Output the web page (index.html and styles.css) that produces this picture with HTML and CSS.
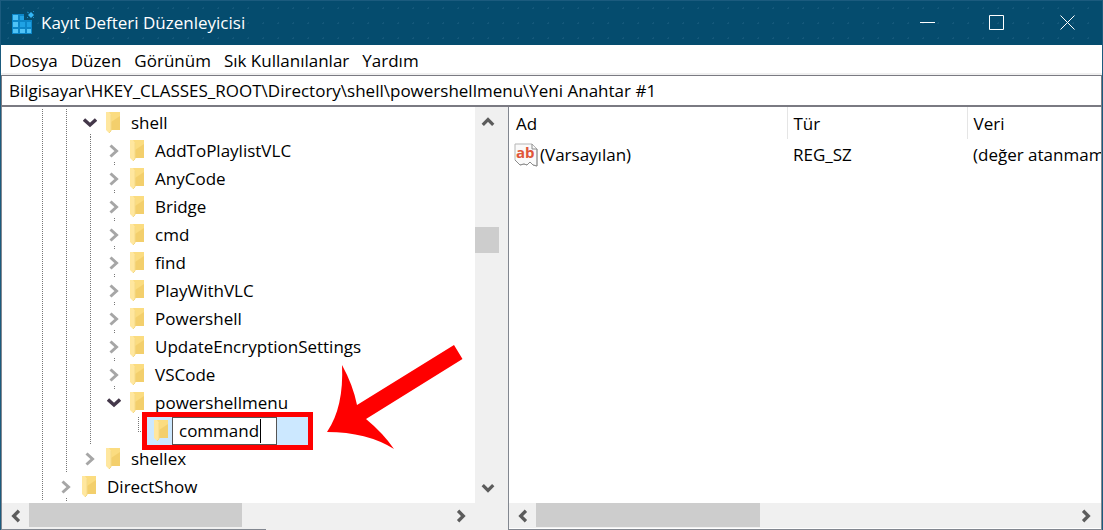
FILE: index.html
```
<!DOCTYPE html>
<html lang="tr">
<head>
<meta charset="utf-8">
<title>Kayıt Defteri Düzenleyicisi</title>
<link rel="stylesheet" href="styles.css">
</head>
<body>
<svg class="defs" width="0" height="0" aria-hidden="true">
  <symbol id="folder" viewBox="0 0 14 22">
    <path d="M3 0h11v18H3z" fill="#fbdc80"/>
    <path d="M5 10l9 -6v14H5z" fill="#f3cf6c"/>
    <path d="M0 0h3l2 3v16l-2 2L0 18z" fill="#ffe79f"/>
    <path d="M5 3v16l-2 2" fill="none" stroke="#f4d987"/>
  </symbol>
  <symbol id="chev-right" viewBox="0 0 10 14"><path d="M1.500 1.500L7.500 7L1.500 12.500" fill="none" stroke="currentColor" stroke-width="3"/></symbol>
  <symbol id="chev-down" viewBox="0 0 14 10"><path d="M1 1.500L7 7L13 1.500" fill="none" stroke="currentColor" stroke-width="3.400"/></symbol>
  <symbol id="arrow" viewBox="0 0 12 12"><path d="M1.500 3.500L6 8L10.500 3.500" fill="none" stroke="currentColor" stroke-width="2.800"/></symbol>
</svg>
<div class="window">
  <header class="titlebar">
    <svg class="app-icon" viewBox="0 0 24 24" aria-hidden="true">
      <path d="M1 3h12v6h8v14H1z" fill="#0c86c8"/>
      <g fill="#4fc3f7"><path d="M2 4h5v5H2zM2 11h5v5H2zM2 18h5v4H2zM9 18h5v4H9zM16 18h4v4h-4z"/></g>
      <g fill="#1fa2e4"><path d="M9 5h4v4H9zM9 11h5v5H9zM16 11h4v5h-4z"/></g>
      <path d="M20 1l3 3l-3 3l-3-3z" fill="#35b6f5"/><path d="M16 1l2 1M23 0l-1 1M23 7l-1-1M16 7l1-1" stroke="#1c8fc9"/>
    </svg>
    <h1 class="title">Kayıt Defteri Düzenleyicisi</h1>
    <div class="controls">
      <button class="control" aria-label="Simge durumuna küçült"><svg viewBox="0 0 16 16"><path d="M1 7.500h15"/></svg></button>
      <button class="control" aria-label="Ekranı kapla"><svg viewBox="0 0 16 16"><path d="M.5 .5h14v14H.5z"/></svg></button>
      <button class="control" aria-label="Kapat"><svg viewBox="0 0 16 16"><path d="M1.500 .5l14 14M15.500 .5l-14 14"/></svg></button>
    </div>
  </header>
  <nav class="menu">
    <button>Dosya</button><button>Düzen</button><button>Görünüm</button><button>Sık Kullanılanlar</button><button>Yardım</button>
  </nav>
  <input class="address" type="text" aria-label="Adres" value="Bilgisayar\HKEY_CLASSES_ROOT\Directory\shell\powershellmenu\Yeni Anahtar #1">
  <main class="panes">
    <section class="left">
      <ul class="tree">
        <li class="row"><i class="line"></i><i class="line"></i><button class="toggle open" aria-label="Daralt"><svg><use href="#chev-down"/></svg></button><svg class="folder"><use href="#folder"/></svg><span>shell</span></li>
        <li class="row"><i class="line"></i><i class="line"></i><i class="line"></i><button class="toggle" aria-label="Genişlet"><svg><use href="#chev-right"/></svg></button><svg class="folder"><use href="#folder"/></svg><span>AddToPlaylistVLC</span></li>
        <li class="row"><i class="line"></i><i class="line"></i><i class="line"></i><button class="toggle" aria-label="Genişlet"><svg><use href="#chev-right"/></svg></button><svg class="folder"><use href="#folder"/></svg><span>AnyCode</span></li>
        <li class="row"><i class="line"></i><i class="line"></i><i class="line"></i><button class="toggle" aria-label="Genişlet"><svg><use href="#chev-right"/></svg></button><svg class="folder"><use href="#folder"/></svg><span>Bridge</span></li>
        <li class="row"><i class="line"></i><i class="line"></i><i class="line"></i><button class="toggle" aria-label="Genişlet"><svg><use href="#chev-right"/></svg></button><svg class="folder"><use href="#folder"/></svg><span>cmd</span></li>
        <li class="row"><i class="line"></i><i class="line"></i><i class="line"></i><button class="toggle" aria-label="Genişlet"><svg><use href="#chev-right"/></svg></button><svg class="folder"><use href="#folder"/></svg><span>find</span></li>
        <li class="row"><i class="line"></i><i class="line"></i><i class="line"></i><button class="toggle" aria-label="Genişlet"><svg><use href="#chev-right"/></svg></button><svg class="folder"><use href="#folder"/></svg><span>PlayWithVLC</span></li>
        <li class="row"><i class="line"></i><i class="line"></i><i class="line"></i><button class="toggle" aria-label="Genişlet"><svg><use href="#chev-right"/></svg></button><svg class="folder"><use href="#folder"/></svg><span>Powershell</span></li>
        <li class="row"><i class="line"></i><i class="line"></i><i class="line"></i><button class="toggle" aria-label="Genişlet"><svg><use href="#chev-right"/></svg></button><svg class="folder"><use href="#folder"/></svg><span>UpdateEncryptionSettings</span></li>
        <li class="row"><i class="line"></i><i class="line"></i><i class="line"></i><button class="toggle" aria-label="Genişlet"><svg><use href="#chev-right"/></svg></button><svg class="folder"><use href="#folder"/></svg><span>VSCode</span></li>
        <li class="row"><i class="line"></i><i class="line"></i><i class="line"></i><button class="toggle open last" aria-label="Daralt"><svg><use href="#chev-down"/></svg></button><svg class="folder"><use href="#folder"/></svg><span>powershellmenu</span></li>
        <li class="row"><i class="line"></i><i class="line"></i><i class="line"></i><i class="blank"></i><i class="elbow"></i>
          <div class="selected"><svg class="folder"><use href="#folder"/></svg><input class="rename" type="text" aria-label="Anahtar adı" value="command"><i class="caret"></i></div>
          <svg class="pointer" viewBox="0 0 136 105" aria-hidden="true"><path d="M127 0L135.500 14L39 74Q56 88 67 104Q40 87 0 87Q17 62 15 20Q26 40 30 60Z" fill="#f00"/></svg>
        </li>
        <li class="row"><i class="line"></i><i class="line"></i><button class="toggle last" aria-label="Genişlet"><svg><use href="#chev-right"/></svg></button><svg class="folder"><use href="#folder"/></svg><span>shellex</span></li>
        <li class="row"><i class="line"></i><button class="toggle" aria-label="Genişlet"><svg><use href="#chev-right"/></svg></button><svg class="folder"><use href="#folder"/></svg><span>DirectShow</span></li>
      </ul>
      <div class="vbar">
        <button class="up" aria-label="Yukarı"><svg><use href="#arrow"/></svg></button>
        <i class="vthumb"></i>
        <button class="down" aria-label="Aşağı"><svg><use href="#arrow"/></svg></button>
      </div>
      <div class="hbar">
        <button class="prev" aria-label="Sola"><svg><use href="#arrow"/></svg></button>
        <i class="hthumb"></i>
        <button class="next" aria-label="Sağa"><svg><use href="#arrow"/></svg></button>
      </div>
    </section>
    <section class="right">
      <div class="list">
        <table>
          <thead><tr><th class="name">Ad</th><th class="type">Tür</th><th>Veri</th></tr></thead>
          <tbody><tr>
            <td><div class="value"><svg class="string-icon" viewBox="0 0 24 24" aria-hidden="true"><path d="M1 1h17l5 5v17l-4-1l-3-3l-3 3l-3-1l-4 1l-5-5z" fill="#fafafa" stroke="#b5b5b5"/><path d="M18 1v5h5M23 6v17l-4-1l-3-3l-3 3l-3-1l-4 1l-5-5" fill="none" stroke="#8c8c8c"/><text x="2" y="15" class="ab">ab</text></svg><span>(Varsayılan)</span></div></td>
            <td>REG_SZ</td><td>(değer atanmamış)</td>
          </tr></tbody>
        </table>
      </div>
      <div class="hbar">
        <button class="prev" aria-label="Sola"><svg><use href="#arrow"/></svg></button>
        <i class="hthumb wide"></i>
        <button class="next" aria-label="Sağa"><svg><use href="#arrow"/></svg></button>
      </div>
    </section>
  </main>
</div>
</body>
</html>
```
FILE: styles.css
```
* { box-sizing: border-box; }
body { margin: 0; background: #fff; color: #000; font: 17px/28px "Open Sans", "Noto Sans", sans-serif; }
button { display: flex; align-items: center; justify-content: center; margin: 0; padding: 0; border: 0; background: none; color: inherit; font: inherit; }
.defs { position: absolute; }
.window { display: flex; flex-direction: column; height: 100vh; overflow: hidden; border-left: 1px solid #1b5b7e; border-right: 1px solid #1b5b7e; }

.titlebar { display: flex; align-items: center; flex: none; height: 45px; padding-left: 10px; border-top: 1px solid #1b5b7e; background: radial-gradient(circle, #14587a 1px, transparent 1px) 0 0 / 15px 15px #054c6e; color: #fff; }
.app-icon { width: 24px; height: 24px; }
.title { flex: 1; margin: 0 0 0 6px; font-size: 17px; font-weight: 400; }
.controls { display: flex; }
.control { width: 70px; height: 44px; }
.control svg { width: 16px; height: 16px; fill: none; stroke: #fff; stroke-width: 1; }

.menu { display: flex; flex: none; gap: 13px; height: 30px; padding: 2px 8px 0; border-bottom: 2px solid #f0f0f0; }
.menu button { height: 28px; white-space: nowrap; }
.address { flex: none; width: 100%; height: 32px; padding: 0 7px; border: 1px solid #7a7a82; border-bottom-width: 2px; outline: 0; background: #fff; color: #000; font: inherit; }

.panes { display: grid; grid-template-columns: 507px 1fr; flex: 1; min-height: 0; }
.left { display: grid; grid-template-columns: 1fr 33px; grid-template-rows: 1fr 27px; min-height: 0; border-left: 1px solid #828790; }
.tree { margin: 0; padding: 2px 0 0 28px; list-style: none; min-height: 0; min-width: 0; overflow: hidden; }
.row { position: relative; display: flex; align-items: center; height: 28px; white-space: nowrap; }
.row > .folder { margin: 0 11px 0 4px; }
.folder { flex: none; width: 14px; height: 22px; }
.line, .blank, .elbow, .toggle { flex: none; width: 24px; height: 28px; }
.line { background: repeating-linear-gradient(#777 0 1px, transparent 1px 2px) 12px 0 / 1px 100% no-repeat; }
.elbow { background: repeating-linear-gradient(#777 0 1px, transparent 1px 2px) 12px 0 / 1px 14px no-repeat, repeating-linear-gradient(90deg, #777 0 1px, transparent 1px 2px) 12px 14px / 12px 1px no-repeat; }
.toggle { color: #a6a6a6; background: repeating-linear-gradient(#777 0 1px, transparent 1px 2px) 12px 25px / 1px 3px no-repeat; }
.toggle svg { width: 10px; height: 14px; }
.toggle.open { color: #44384a; }
.toggle.open svg { width: 14px; height: 10px; }
.toggle.last { background: none; }
.selected { position: absolute; left: 112px; top: -5px; display: flex; align-items: center; width: 171px; height: 38px; padding-left: 7px; border: 5px solid #f00; background: #cce8ff; }
.rename { width: 105px; height: 28px; margin-left: 4px; padding: 0 0 0 6px; border: 1px solid #555; outline: 0; background: #fff; color: #000; font: inherit; }
.caret { position: absolute; left: 113px; top: 2px; width: 1px; height: 24px; background: #000; }
.pointer { position: absolute; left: 297px; top: -72px; width: 136px; height: 105px; }

.vbar { display: flex; flex-direction: column; background: #f0f0f0; }
.vbar button, .hbar button { flex: none; width: 26px; height: 26px; color: #5c5c5c; }
.vbar button { height: 30px; }
.vbar svg, .hbar svg { width: 14px; height: 14px; }
.up svg { transform: rotate(180deg); }
.prev svg { transform: rotate(90deg); }
.next svg { transform: rotate(-90deg); }
.vthumb { flex: none; width: 24px; height: 26px; margin-top: 90px; background: #cdcdcd; }
.down { margin-top: auto; }
.hbar { display: flex; height: 27px; background: #f0f0f0; }
.hbar .prev { width: 27px; }
.left .hbar { grid-column: 1 / -1; padding-right: 34px; background: linear-gradient(#828790, #828790) 0 100% / 264px 1px no-repeat #f0f0f0; }
.hthumb { width: 213px; height: 24px; margin-right: auto; background: #cdcdcd; }
.hthumb.wide { width: 224px; }

.right { display: flex; flex-direction: column; min-width: 0; min-height: 0; border: 1px solid #828790; border-top: 0; }
.list { flex: 1; min-height: 0; overflow: hidden; }
.right .hbar { flex: none; height: 26px; padding-right: 2px; border-bottom: 1px solid #fff; }
table { width: 100%; border-collapse: collapse; table-layout: fixed; }
th, td { padding: 0 0 0 6px; overflow: hidden; font-weight: 400; text-align: left; white-space: nowrap; }
th { height: 32px; padding-top: 2px; }
th:first-child { padding-left: 7px; }
td { height: 32px; }
td:first-child { padding-left: 5px; }
.name { width: 278px; border-right: 1px solid #e5e5e5; }
.type { width: 180px; border-right: 1px solid #e5e5e5; }
.value { display: flex; align-items: center; gap: 2px; }
.string-icon { width: 24px; height: 24px; }
.ab { fill: #e0563a; font: 700 15px "Open Sans", sans-serif; }
```
